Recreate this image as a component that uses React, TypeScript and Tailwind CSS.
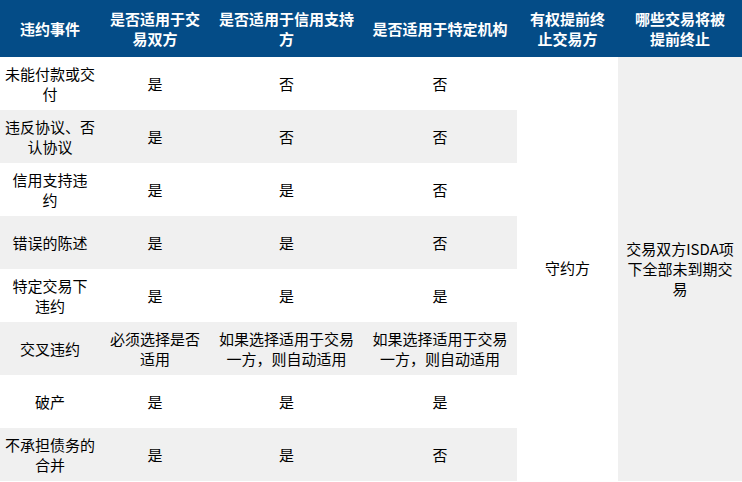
import React from 'react';

type Row = {
  event: React.ReactNode;
  parties: React.ReactNode;
  credit: React.ReactNode;
  entity: React.ReactNode;
};

const rows: Row[] = [
  { event: <>未能付款或交<br />付</>, parties: '是', credit: '否', entity: '否' },
  { event: <>违反协议、否<br />认协议</>, parties: '是', credit: '否', entity: '否' },
  { event: <>信用支持违<br />约</>, parties: '是', credit: '是', entity: '否' },
  { event: '错误的陈述', parties: '是', credit: '是', entity: '否' },
  { event: <>特定交易下<br />违约</>, parties: '是', credit: '是', entity: '是' },
  {
    event: '交叉违约',
    parties: <>必须选择是否<br />适用</>,
    credit: <>如果选择适用于交易<br />一方，则自动适用</>,
    entity: <>如果选择适用于交易<br />一方，则自动适用</>,
  },
  { event: '破产', parties: '是', credit: '是', entity: '是' },
  { event: <>不承担债务的<br />合并</>, parties: '是', credit: '是', entity: '否' },
];

const headers: React.ReactNode[] = [
  '违约事件',
  <>是否适用于交<br />易双方</>,
  <>是否适用于信用支持<br />方</>,
  '是否适用于特定机构',
  <>有权提前终<br />止交易方</>,
  <>哪些交易将被<br />提前终止</>,
];

const Cell: React.FC<{ children: React.ReactNode; shaded: boolean }> = ({ children, shaded }) => (
  <div
    className={`flex h-[53px] items-center justify-center whitespace-nowrap text-center ${
      shaded ? 'bg-[#f0f0f0]' : 'bg-white'
    }`}
  >
    {children}
  </div>
);

export default function App() {
  return (
    <div
      className="w-[742px] h-[482px] bg-white text-[15px] leading-[20px] text-black"
      style={{ fontFamily: '"Microsoft YaHei", "Noto Sans CJK SC", "Noto Sans", sans-serif' }}
    >
      {/* header */}
      <div className="grid h-[57px] grid-cols-[100px_110px_153px_154px_101px_124px] bg-[#044c87] font-bold text-white">
        {headers.map((h, i) => (
          <div key={i} className="flex items-center justify-center whitespace-nowrap text-center">
            {h}
          </div>
        ))}
      </div>

      {/* body */}
      <div className="flex">
        <div className="w-[517px]">
          {rows.map((r, i) => (
            <div key={i} className="grid grid-cols-[100px_110px_153px_154px]">
              <Cell shaded={i % 2 === 1}>{r.event}</Cell>
              <Cell shaded={i % 2 === 1}>{r.parties}</Cell>
              <Cell shaded={i % 2 === 1}>{r.credit}</Cell>
              <Cell shaded={i % 2 === 1}>{r.entity}</Cell>
            </div>
          ))}
        </div>
        <div className="flex w-[101px] items-center justify-center bg-white pb-[2px]">守约方</div>
        <div className="flex w-[124px] items-center justify-center bg-[#f0f0f0] text-center">
          交易双方ISDA项
          <br />
          下全部未到期交
          <br />
          易
        </div>
      </div>
    </div>
  );
}
